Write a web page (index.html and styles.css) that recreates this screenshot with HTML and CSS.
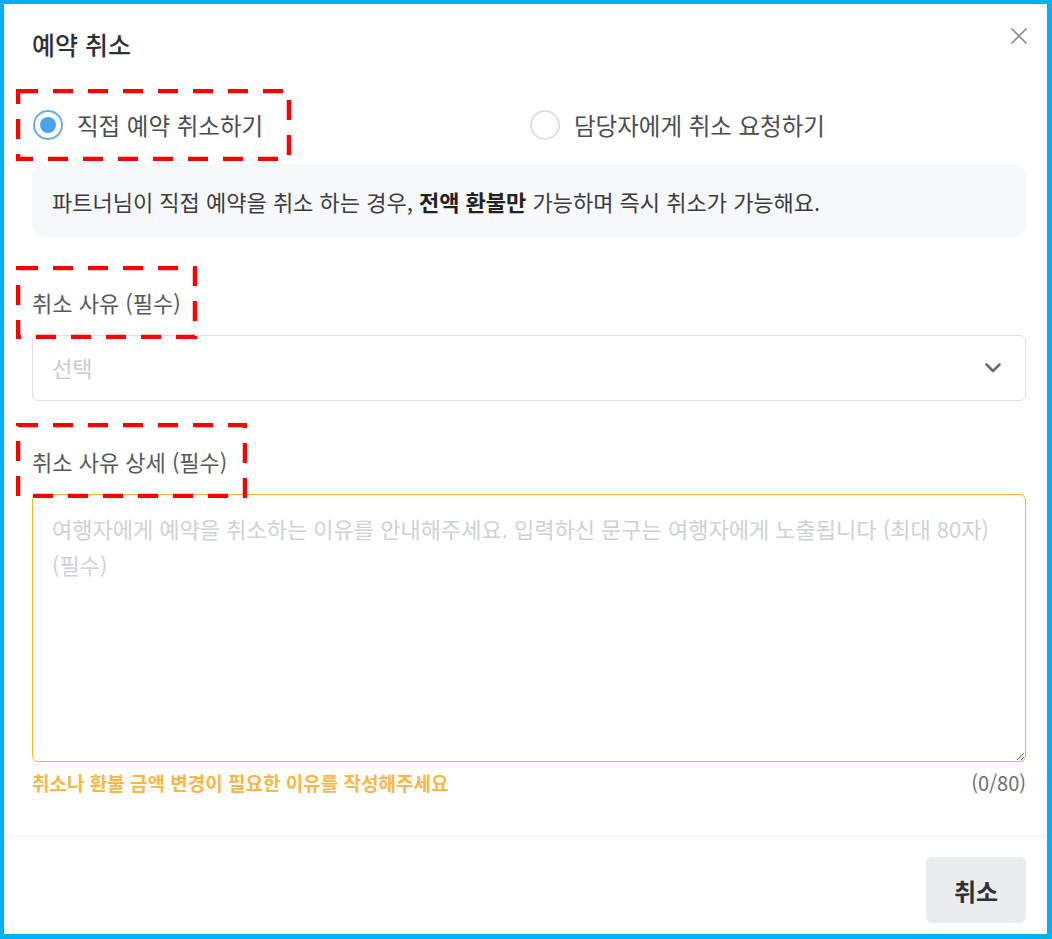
FILE: index.html
```html
<!DOCTYPE html>
<html lang="ko">
<head>
    <meta charset="UTF-8">
    <meta name="viewport" content="width=device-width, initial-scale=1.0">
    <title>예약 취소</title>
    <link rel="stylesheet" href="styles.css">
</head>
<body>
    <div id="frame">
        <div class="modal-header">
            <h2 class="modal-title">예약 취소</h2>
            <span class="close-btn">
                <svg width="18" height="18" viewBox="0 0 18 18"><path d="M1.5 1.5 L16.5 16.5 M16.5 1.5 L1.5 16.5" stroke="#8a8d91" stroke-width="1.6" fill="none"/></svg>
            </span>
        </div>

        <div class="modal-body">
            <div class="radio-group">
                <label class="radio-item">
                    <span class="radio checked"><span class="radio-dot"></span></span>
                    <span>직접 예약 취소하기</span>
                </label>
                <label class="radio-item">
                    <span class="radio"></span>
                    <span>담당자에게 취소 요청하기</span>
                </label>
            </div>

            <div class="info-box">
                <p>파트너님이 직접 예약을 취소 하는 경우, <b>전액 환불만</b> 가능하며 즉시 취소가 가능해요.</p>
            </div>

            <div class="field-label first">취소 사유 (필수)</div>
            <div class="select-box">
                <span class="placeholder">선택</span>
                <svg width="16" height="10" viewBox="0 0 16 10"><path d="M1.5 1.5 L8 8 L14.5 1.5" stroke="#6b6f75" stroke-width="2.6" fill="none" stroke-linecap="round" stroke-linejoin="round"/></svg>
            </div>

            <div class="field-label">취소 사유 상세 (필수)</div>
            <textarea class="reason-text" placeholder="여행자에게 예약을 취소하는 이유를 안내해주세요. 입력하신 문구는 여행자에게 노출됩니다 (최대 80자) (필수)"></textarea>
            <div class="helper-row">
                <span class="helper-msg">취소나 환불 금액 변경이 필요한 이유를 작성해주세요</span>
                <span class="counter">(0/80)</span>
            </div>
        </div>

        <div class="modal-footer">
            <button class="cancel-btn">취소</button>
        </div>

        <!-- annotation boxes -->
        <svg class="mark mark-1" width="275" height="72"><rect x="2" y="2" width="271" height="68" fill="none" stroke="#ff0000" stroke-width="4.5" stroke-dasharray="20 15"/></svg>
        <svg class="mark mark-2" width="181" height="73"><rect x="2" y="2" width="177" height="69" fill="none" stroke="#ff0000" stroke-width="4.5" stroke-dasharray="20 15"/></svg>
        <svg class="mark mark-3" width="231" height="75"><rect x="2" y="2" width="227" height="71" fill="none" stroke="#ff0000" stroke-width="4.5" stroke-dasharray="20 15"/></svg>
    </div>
</body>
</html>
```

FILE: styles.css
```css
*{
    box-sizing: border-box;
}
body{
    margin: 0;
    font-family: "Noto Sans CJK KR", "Noto Sans", sans-serif;
    color: #333;
}
#frame{
    position: relative;
    width: 1052px;
    height: 939px;
    border-style: solid;
    border-color: #00b0f0;
    border-width: 4px 5px 5px 4px;
    background: #fff;
    display: flex;
    flex-direction: column;
}

.modal-header{
    display: flex;
    justify-content: space-between;
    align-items: flex-start;
    padding: 25px 20px 0 28px;
}
.modal-title{
    margin: 0;
    font-size: 25px;
    line-height: 30px;
    font-weight: 500;
    color: #2f3135;
}
.close-btn{
    display: flex;
    margin-top: -2px;
    margin-right: -1px;
}

.modal-body{
    padding: 0 21px 0 28px;
}
.radio-group{
    display: grid;
    grid-template-columns: 1fr 1fr;
    margin-top: 46px;
}
.radio-item{
    display: flex;
    align-items: center;
    gap: 14px;
    height: 40px;
    font-size: 23.5px;
    color: #4a4d52;
}
.radio{
    width: 30px;
    height: 30px;
    border-radius: 50%;
    border: 2px solid #dcdfe3;
    display: flex;
    align-items: center;
    justify-content: center;
    margin-left: 1px;
}
.radio.checked{
    border-color: #62aef2;
}
.radio-dot{
    width: 16px;
    height: 16px;
    border-radius: 50%;
    background: #4aa3ee;
}

.info-box{
    margin-top: 19px;
    height: 73px;
    display: flex;
    align-items: center;
    padding-left: 20px;
    background: #f7f8fa;
    border-radius: 12px;
}
.info-box p{
    margin: 0;
    font-size: 22px;
    color: #3a3c40;
}
.info-box b{
    color: #222;
}

.field-label{
    margin-top: 45px;
    font-size: 22px;
    line-height: 30px;
    color: #55585d;
}
.field-label.first{
    margin-top: 50px;
}
.select-box{
    margin-top: 18px;
    height: 66px;
    border: 1.5px solid #dfe1e4;
    border-radius: 6px;
    display: flex;
    align-items: center;
    justify-content: space-between;
    padding: 0 24px 0 19px;
}
.placeholder{
    font-size: 22px;
    color: #c9cbce;
    margin-top: -3px;
}

.reason-text{
    display: block;
    width: 100%;
    margin-top: 18px;
    height: 268px;
    border: 1.5px solid #f9b634;
    border-radius: 6px;
    padding: 15px 19px;
    font-family: inherit;
    font-size: 22px;
    line-height: 36px;
    color: #333;
    resize: vertical;
    outline: none;
}
.reason-text::placeholder{
    color: #cfd1d4;
}
.helper-row{
    display: flex;
    justify-content: space-between;
    align-items: center;
    margin-top: 8px;
    height: 24px;
}
.helper-msg{
    font-size: 19px;
    font-weight: 700;
    color: #fbb647;
}
.counter{
    font-size: 20px;
    color: #6b6e73;
}

.modal-footer{
    margin-top: 42px;
    border-top: 1px solid #eeeff1;
    display: flex;
    justify-content: flex-end;
    padding: 20px 21px 0 0;
}
.cancel-btn{
    width: 100px;
    height: 66px;
    border: none;
    border-radius: 6px;
    background: #e9ecef;
    font-family: inherit;
    font-size: 24px;
    font-weight: 700;
    color: #2f3135;
}

.mark{
    position: absolute;
}
.mark-1{
    left: 12px;
    top: 85px;
}
.mark-2{
    left: 12px;
    top: 262px;
}
.mark-3{
    left: 12px;
    top: 419px;
}
```
